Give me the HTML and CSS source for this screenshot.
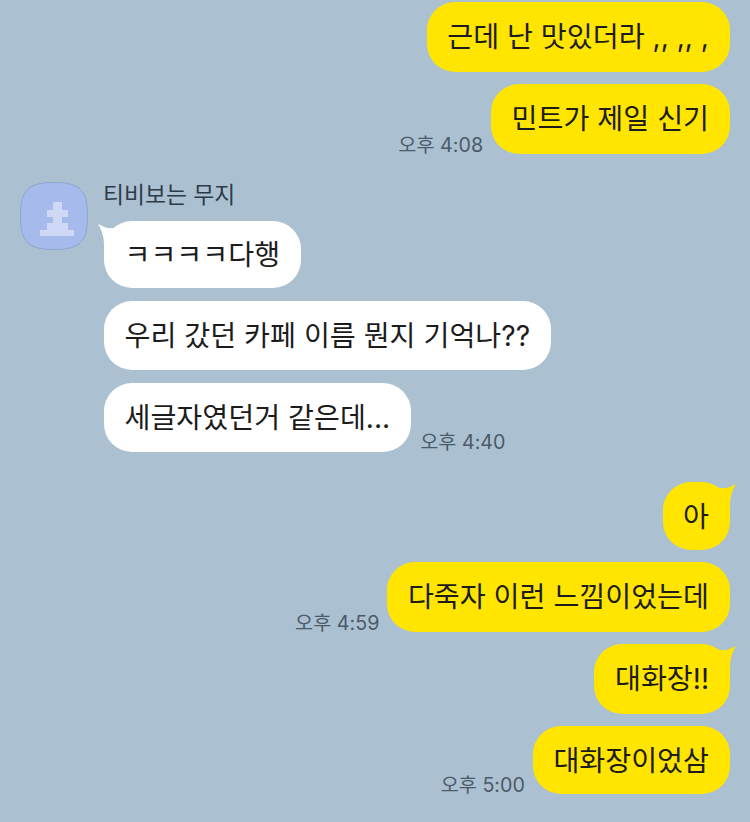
FILE: index.html
```html
<!DOCTYPE html>
<html lang="ko">
<head>
  <meta charset="UTF-8">
  <meta name="viewport" content="width=device-width, initial-scale=1.0">
  <title>대화</title>
  <link rel="stylesheet" href="styles.css">
</head>
<body>
  <div class="chat">
    <div class="group mine first-group">
      <div class="row"><div class="bubble yellow">근데 난 맛있더라 ,, ,, ,</div></div>
      <div class="row"><span class="time">오후 4:08</span><div class="bubble yellow">민트가 제일 신기</div></div>
    </div>

    <div class="group other">
      <svg class="avatar" width="68" height="68" viewBox="0 0 68 68">
        <path d="M34 .5C60 .5 67.500 8 67.500 34S60 67.500 34 67.500.5 60 .5 34 8 .5 34 .5Z" fill="#a6bbec" stroke="#8ea6cf"/>
        <path d="M33 20h9v8h6v7h-6v6h6v7h6v6H20v-6h7v-7h6v-6h-6v-7h6Z" fill="#cfd9f5"/>
      </svg>
      <div class="messages">
        <div class="name">티비보는 무지</div>
        <div class="row">
          <div class="bubble white tiny tail-left">ㅋㅋㅋㅋ다행
            <svg class="tail" width="20" height="24" viewBox="0 0 20 24"><path d="M0 0C3 1 8 5 14 4H20V24H6V21C6 14 4 6 0 0Z" fill="#fff"/></svg>
          </div>
        </div>
        <div class="row"><div class="bubble white">우리 갔던 카페 이름 뭔지 기억나??</div></div>
        <div class="row"><div class="bubble white">세글자였던거 같은데...</div><span class="time time-left">오후 4:40</span></div>
      </div>
    </div>

    <div class="group mine last-group">
      <div class="row">
        <div class="bubble yellow short tail-right">아
          <svg class="tail" width="20" height="24" viewBox="0 0 20 24"><path d="M20 0C17 1 12 5 6 4H0V24H14V21C14 14 16 6 20 0Z" fill="#ffe500"/></svg>
        </div>
      </div>
      <div class="row"><span class="time">오후 4:59</span><div class="bubble yellow">다죽자 이런 느낌이었는데</div></div>
      <div class="row">
        <div class="bubble yellow tail-right">대화장!!
          <svg class="tail" width="20" height="24" viewBox="0 0 20 24"><path d="M20 0C17 1 12 5 6 4H0V24H14V21C14 14 16 6 20 0Z" fill="#ffe500"/></svg>
        </div>
      </div>
      <div class="row"><span class="time">오후 5:00</span><div class="bubble yellow short">대화장이었삼</div></div>
    </div>
  </div>
</body>
</html>
```

FILE: styles.css
```css
body {
  margin: 0;
  background-color: #abc1d1;
  font-family: Inter, "Noto Sans CJK KR", "Noto Sans", sans-serif;
  color: #1c1c1c;
}
.chat {
  padding: 2px 20px 0;
}
.group {
  display: flex;
  flex-direction: column;
  gap: 12px;
  margin-top: 28px;
}
.first-group {
  margin-top: 0;
}
.last-group {
  margin-top: 30px;
}
.group.other {
  flex-direction: row;
  gap: 16px;
  align-items: flex-start;
}
.group.mine .row {
  justify-content: flex-end;
}
.messages {
  display: flex;
  flex-direction: column;
  gap: 13px;
}
.name {
  font-size: 22.800px;
  line-height: 26px;
  color: #2d3b48;
  margin-left: -1px;
}
.row {
  display: flex;
  align-items: flex-end;
}
.bubble {
  position: relative;
  padding: 18px 21px 18px 20.500px;
  font-size: 28.200px;
  line-height: 34px;
  border-radius: 28px;
  white-space: nowrap;
}
.bubble.white {
  padding-bottom: 17px;
}
.bubble.short {
  padding-bottom: 16px;
}
.bubble.white.tiny {
  padding-top: 17px;
  padding-bottom: 16px;
}
.yellow {
  background-color: #ffe500;
}
.white {
  background-color: #fff;
}
.time {
  font-size: 19.700px;
  line-height: 24px;
  color: #4b5a68;
  margin: 0 8px -3px 10px;
}
.time-left {
  margin-left: 9px;
  margin-bottom: -2px;
}
.tail {
  position: absolute;
  top: 2px;
}
.tail-left .tail {
  left: -6px;
  top: 3px;
}
.tail-right .tail {
  right: -6px;
}
```
